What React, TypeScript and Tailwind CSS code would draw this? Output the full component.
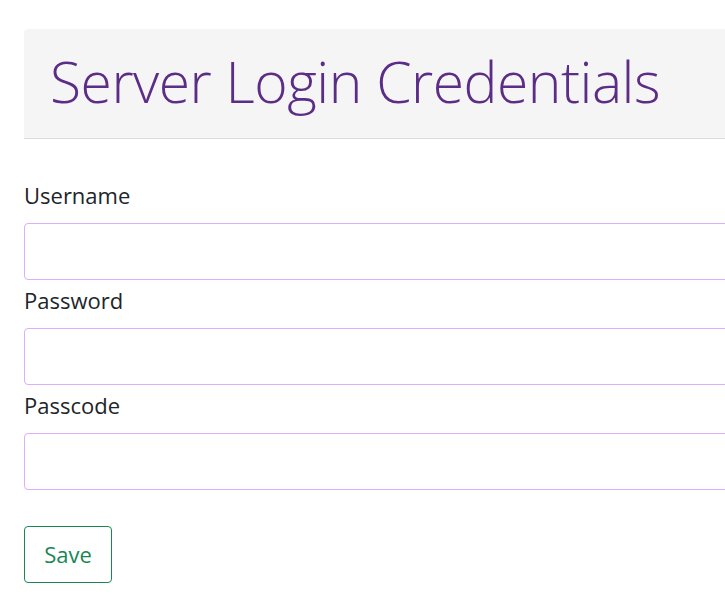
export default function App() {
  return (
    <div className="min-h-screen bg-white pt-[29px] pl-6 overflow-hidden font-['Open_Sans',sans-serif]">
      <div className="w-[760px]">
        {/* Header */}
        <div className="bg-[#f5f5f5] rounded-t border-b border-[#dcdcdc] h-[110px] flex items-center pl-[26px] pb-[5px]">
          <h1 className="text-[57px] font-light text-[#5b2d87] leading-none tracking-[-0.5px]">Server Login Credentials</h1>
        </div>

        {/* Form */}
        <form className="pt-[41px]">
          {['Username', 'Password', 'Passcode'].map((label, i) => (
            <div key={label} className={i > 0 ? 'mt-[5px]' : ''}>
              <label className="block h-[30px] leading-[30px] text-[22px] text-[#212529] mb-[13px]">{label}</label>
              <input
                type={label === 'Username' ? 'text' : 'password'}
                className="block w-full h-[57px] border border-[#dcaefc] rounded-[4px] bg-white px-3 outline-none"
              />
            </div>
          ))}
          <button
            type="button"
            className="mt-[36px] w-[88px] h-[57px] border border-[#198754] rounded-[4px] text-[#198754] text-[22px] bg-white"
          >
            Save
          </button>
        </form>
      </div>
    </div>
  )
}
